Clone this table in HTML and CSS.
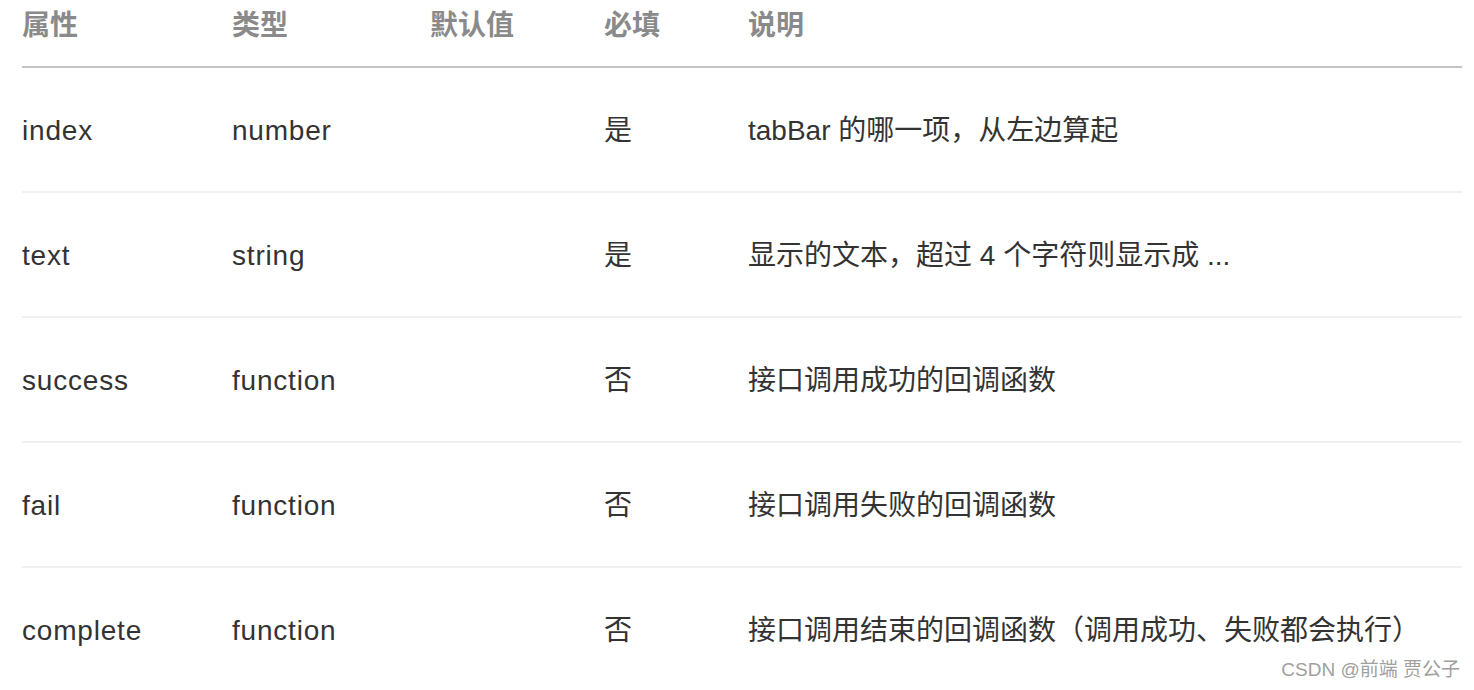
FILE: index.html
```html
<!DOCTYPE html>
<html lang="zh-CN">
<head>
<meta charset="utf-8">
<link rel="stylesheet" href="styles.css">
</head>
<body>
<div class="page">
<table class="props">
  <colgroup>
    <col class="c-name"><col class="c-type"><col class="c-def"><col class="c-req"><col class="c-desc">
  </colgroup>
  <thead>
    <tr><th>属性</th><th>类型</th><th>默认值</th><th>必填</th><th>说明</th></tr>
  </thead>
  <tbody>
    <tr><td class="code">index</td><td class="code">number</td><td></td><td>是</td><td>tabBar 的哪一项，从左边算起</td></tr>
    <tr><td class="code">text</td><td class="code">string</td><td></td><td>是</td><td>显示的文本，超过 4 个字符则显示成 ...</td></tr>
    <tr><td class="code">success</td><td class="code">function</td><td></td><td>否</td><td>接口调用成功的回调函数</td></tr>
    <tr><td class="code">fail</td><td class="code">function</td><td></td><td>否</td><td>接口调用失败的回调函数</td></tr>
    <tr><td class="code">complete</td><td class="code">function</td><td></td><td>否</td><td>接口调用结束的回调函数（调用成功、失败都会执行）</td></tr>
  </tbody>
</table>
<div class="watermark">CSDN @前端 贾公子</div>
</div>
</body>
</html>
```
FILE: styles.css
```css
html, body {
  margin: 0;
  padding: 0;
  background: #fff;
  overflow: hidden;
}
.page {
  position: relative;
  width: 1474px;
  height: 690px;
  font-family: "Liberation Sans", "Noto Sans CJK SC", sans-serif;
}
.props {
  margin-left: 22px;
  width: 1440px;
  border-collapse: collapse;
  table-layout: fixed;
  font-size: 28px;
}
.c-name { width: 210px; }
.c-type { width: 198px; }
.c-def { width: 174px; }
.c-req { width: 144px; }
.c-desc { width: auto; }
.props th {
  text-align: left;
  font-weight: bold;
  color: #8a8a8a;
  line-height: 40px;
  padding: 6px 0 20px 0;
  border-bottom: 2px solid #c4c4c4;
}
.props td {
  color: #333;
  height: 121px;
  padding: 2px 0 0 0;
  line-height: 40px;
  vertical-align: middle;
  border-bottom: 2px solid #f0f0f0;
  white-space: nowrap;
}
.props td.code {
  letter-spacing: 0.8px;
}
.watermark {
  position: absolute;
  right: 14px;
  top: 658px;
  font-size: 19px;
  line-height: 24px;
  color: #a0a0a0;
  text-shadow: 0 0 1px #fff;
}
```
